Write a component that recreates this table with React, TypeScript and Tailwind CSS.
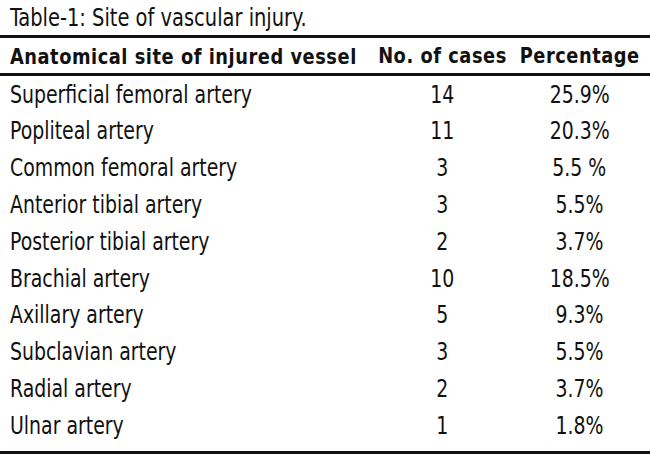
const rows = [
  { site: "Superficial femoral artery", cases: "14", pct: "25.9%" },
  { site: "Popliteal artery", cases: "11", pct: "20.3%" },
  { site: "Common femoral artery", cases: "3", pct: "5.5 %" },
  { site: "Anterior tibial artery", cases: "3", pct: "5.5%" },
  { site: "Posterior tibial artery", cases: "2", pct: "3.7%" },
  { site: "Brachial artery", cases: "10", pct: "18.5%" },
  { site: "Axillary artery", cases: "5", pct: "9.3%" },
  { site: "Subclavian artery", cases: "3", pct: "5.5%" },
  { site: "Radial artery", cases: "2", pct: "3.7%" },
  { site: "Ulnar artery", cases: "1", pct: "1.8%" },
];

// narrow type face: squeeze the condensed face a bit further
const Left = ({ children }: { children: string }) => (
  <span className="inline-block whitespace-nowrap origin-left scale-x-[0.84]">{children}</span>
);

const Mid = ({ children }: { children: string }) => (
  <span className="inline-block whitespace-nowrap origin-center scale-x-[0.84]">{children}</span>
);

const Head = ({ children, left }: { children: string; left?: boolean }) => (
  <span
    className={`inline-block whitespace-nowrap font-bold text-[22px] tracking-[0.6px] scale-x-[0.9] ${
      left ? "origin-left" : "origin-center"
    }`}
  >
    {children}
  </span>
);

const App = () => {
  return (
    <div
      className="w-[650px] h-[463px] bg-white text-[#111] overflow-hidden text-[25px]"
      style={{ fontFamily: '"DejaVu Sans Condensed", "Liberation Sans Narrow", sans-serif' }}
    >
      <div className="h-[35px] pl-[10px] leading-[35px]">
        <span className="inline-block whitespace-nowrap origin-left scale-x-[0.865]">
          Table-1: Site of vascular injury.
        </span>
      </div>
      <div className="flex h-[41px] items-center border-y-[3px] border-[#111]">
        <div className="w-[375px] pl-[10px]">
          <Head left>Anatomical site of injured vessel</Head>
        </div>
        <div className="w-[134px] flex justify-center">
          <Head>No. of cases</Head>
        </div>
        <div className="w-[141px] flex justify-center">
          <Head>Percentage</Head>
        </div>
      </div>
      <div className="flex flex-col">
        {rows.map((r) => (
          <div key={r.site} className="flex h-[36.8px] items-center">
            <div className="w-[375px] pl-[10px]">
              <Left>{r.site}</Left>
            </div>
            <div className="w-[134px] flex justify-center">
              <Mid>{r.cases}</Mid>
            </div>
            <div className="w-[141px] flex justify-center">
              <Mid>{r.pct}</Mid>
            </div>
          </div>
        ))}
      </div>
      <div className="mt-[7px] border-t-[3px] border-[#111]" />
    </div>
  );
};

export default App;
